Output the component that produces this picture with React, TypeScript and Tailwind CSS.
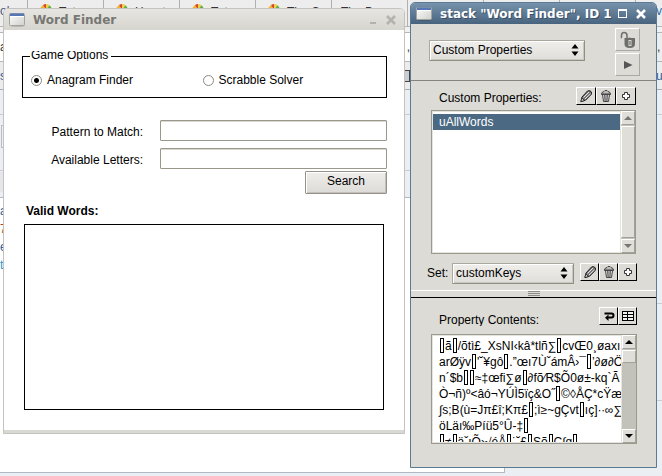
import React, { useState } from "react";

const SANS = "font-['Liberation_Sans',Arial,sans-serif]";
const TITLE = "font-['DejaVu_Sans',Verdana,sans-serif]";

/* ---------- icons ---------- */

function WindowIcon() {
  return (
    <svg width="17" height="14" viewBox="0 0 17 14" aria-hidden="true" className="shrink-0">
      <defs>
        <linearGradient id="pane" x1="0" y1="0" x2="1" y2="1">
          <stop offset="0" stopColor="#ffffff" />
          <stop offset="1" stopColor="#cfcfcb" />
        </linearGradient>
      </defs>
      <ellipse cx="8.500" cy="12.800" rx="7.500" ry="1.200" fill="#000" opacity="0.15" />
      <rect x="0.500" y="0.500" width="15" height="12" rx="1" fill="url(#pane)" stroke="#a3a3a0" />
      <rect x="1" y="0.500" width="14" height="2.500" fill="#5577b4" />
      <rect x="1" y="3" width="14" height="1" fill="#fff" />
    </svg>
  );
}

function PencilIcon() {
  return (
    <svg width="14" height="14" viewBox="0 0 14 14" aria-hidden="true">
      <path d="M3 8 L8.500 2 Q10.500 1 12 2.500 Q13 4 12.200 5.500 L6.500 11.300 L2 12.500 Z" fill="#777" stroke="#222" />
      <path d="M4.500 8.500 L10 3 M6 10 L11.500 4.800" stroke="#e6e6e6" strokeWidth="1" />
      <path d="M2.800 9.200 L5.500 11.500 L1.800 12.500 Z" fill="#fff" stroke="#111" strokeWidth="0.8" />
    </svg>
  );
}

function TrashIcon() {
  return (
    <svg width="14" height="14" viewBox="0 0 14 14" aria-hidden="true">
      <path d="M2.500 5 Q2.500 3 5 2.500 L6 1.500 H8 L9 2.500 Q11.500 3 11.500 5 Z" fill="#bbb" stroke="#444" />
      <path d="M3.500 5.500 L4.500 12.500 H9.500 L10.500 5.500 Z" fill="#e4e4e4" stroke="#444" />
      <path d="M5.500 6 L6 12 M7 6 V12 M8.500 6 L8 12 M2 5.500 H12" stroke="#444" strokeWidth="0.8" />
    </svg>
  );
}

function PlusIcon() {
  return (
    <svg width="14" height="14" viewBox="0 0 14 14" aria-hidden="true">
      <path
        d="M5.500 3.500 H8.500 V5.500 H10.500 V8.500 H8.500 V10.500 H5.500 V8.500 H3.500 V5.500 H5.500 Z"
        fill="#fff"
        stroke="#333"
      />
    </svg>
  );
}

function LockIcon() {
  return (
    <svg width="18" height="18" viewBox="0 0 18 18" aria-hidden="true">
      <path
        d="M3 6.500 H2.500 V4.500 Q2.500 1.500 5 1.500 Q8 1.500 8 4.500 V8"
        fill="none"
        stroke="#6e6e6a"
        strokeWidth="1.500"
      />
      <path d="M5.500 7 H9 Q10.500 6 12 7 H16 V13 Q16 17 10.800 17 Q5.500 17 5.500 13 Z" fill="#6e6e6a" />
      <rect x="9.500" y="9" width="3" height="6" fill="#dcdbd6" />
      <rect x="10.500" y="10" width="1" height="4" fill="#555" />
    </svg>
  );
}

function WrapIcon() {
  return (
    <svg width="14" height="14" viewBox="0 0 14 14" aria-hidden="true">
      <path
        d="M2.500 4.500 H9.500 Q11.500 4.500 11.500 6.200 Q11.500 8.500 9.500 8.500 H6"
        fill="none"
        stroke="#000"
        strokeWidth="2"
      />
      <path d="M6.500 5.500 V12 L3 8.700 Z" fill="#000" />
    </svg>
  );
}

function GridIcon() {
  return (
    <svg width="14" height="14" viewBox="0 0 14 14" aria-hidden="true">
      <rect x="1.500" y="2.500" width="11" height="9" fill="#f2f2ee" stroke="#000" />
      <path d="M1 5.500 H13 M1 8.500 H13 M6.500 2 V12" stroke="#000" />
    </svg>
  );
}

function TabFavicon() {
  return (
    <svg width="12" height="12" viewBox="0 0 12 12" aria-hidden="true" className="shrink-0">
      <path d="M0 6 A6 6 0 0 1 3 1 L6 6 Z" fill="#f2b430" />
      <path d="M3 1 A6 6 0 0 1 6 0 L6 6 Z" fill="#d8472b" />
      <path d="M6 0 A6 6 0 0 1 9.500 1.200 L6 6 Z" fill="#f0d040" />
      <path d="M9.500 1.200 A6 6 0 0 1 12 6 L6 6 Z" fill="#5fae46" />
      <path d="M0 6 H12 V12 H0 Z" fill="#e9842c" />
    </svg>
  );
}

/* ---------- small controls ---------- */

function ToolButton({ label, children }: { label: string; children: React.ReactNode }) {
  return (
    <button
      type="button"
      aria-label={label}
      className="flex h-[18px] min-w-0 flex-1 items-center justify-center border-t border-r border-b border-l border-t-white border-r-black border-b-black border-l-white bg-[#dcdbd6]"
    >
      {children}
    </button>
  );
}

function FlatButton({ label, children }: { label: string; children: React.ReactNode }) {
  return (
    <button
      type="button"
      aria-label={label}
      className="flex h-[23px] w-[25px] items-center justify-center border border-t-white border-r-[#aaa9a4] border-b-[#aaa9a4] border-l-white"
    >
      {children}
    </button>
  );
}

function PopupSelect({ label, id, options }: { label?: string; id: string; options: string[] }) {
  return (
    <div className="relative w-full">
      <select
        id={id}
        aria-label={label}
        className="block h-[21px] w-full appearance-none rounded-[1px] border border-t-[#aaa89f] border-r-[#918f84] border-b-[#918f84] border-l-[#aaa89f] bg-linear-to-b from-[#efeeeb] to-[#dfded9] pb-[2px] pl-[3px] text-[12px] leading-[16px] text-black shadow-[inset_1px_1px_0_#fff,inset_-1px_-1px_0_#c9c7bf]"
      >
        {options.map((o) => (
          <option key={o}>{o}</option>
        ))}
      </select>
      <svg
        width="8"
        height="12"
        viewBox="0 0 8 12"
        aria-hidden="true"
        className="pointer-events-none absolute top-[4px] right-[6px]"
      >
        <path d="M4 0 L7.500 4.500 H0.500 Z M4 12 L7.500 7.500 H0.500 Z" fill="#000" />
      </svg>
    </div>
  );
}

function ScrollArrow({ dir, dim }: { dir: "up" | "down"; dim?: boolean }) {
  return (
    <button
      type="button"
      aria-label={dir === "up" ? "Scroll up" : "Scroll down"}
      className="flex h-[14px] w-full shrink-0 items-center justify-center border border-t-white border-r-[#a3a198] border-b-[#a3a198] border-l-white bg-[#dfded9]"
    >
      <svg width="8" height="4" viewBox="0 0 8 4" aria-hidden="true">
        <path d={dir === "up" ? "M4 0 L8 4 H0 Z" : "M0 0 H8 L4 4 Z"} fill={dim ? "#777670" : "#000"} />
      </svg>
    </button>
  );
}

function Missing() {
  return <span className="mx-px inline-block h-[15px] w-[4px] border border-black align-[-3px]" />;
}

/* Unprintable characters are kept as "|" and shown as empty boxes. */
const CONTENTS = [
  "|ã|/õtì£_XsNI‹kâ*tlñ∑|cvŒ0¸øaxı",
  "arØÿv|'˘¥gô|.”œı7ÙˇámÂ›¯|’∂ø∂Ö",
  "n´$b||≈‡œﬁ∑ø|∂fõ⁄R$Õ0ø±-kq`Ã",
  "Ò¬ñ)º<âó¬YÚÌ5ïç&O˝|©◊ÅÇ*cŸæ",
  "∫s;B(ù=Jπ£î;Kπ£|;ì≥~gÇvt|ıç]·∙∞∑¸",
  "öLäı‰Píü5°Û-‡|",
  "|≠|äˇıÕ›√éÅ|˙˘£|Sõ|Ç∫g|",
];

function ContentLine({ text }: { text: string }) {
  const parts = text.split("|");
  return (
    <div className="h-[16px]">
      {parts.map((p, i) => (
        <React.Fragment key={i}>
          {i > 0 && <Missing />}
          {p}
        </React.Fragment>
      ))}
    </div>
  );
}

/* ---------- desktop behind the windows ---------- */

function Backdrop() {
  const tabs = ["Tutor", "How t", "Tutor", "The C"];
  return (
    <div
      aria-hidden="true"
      className="absolute inset-0 flex flex-col overflow-hidden bg-[#ebeff3] text-[12px] leading-[16px] text-[#333]"
    >
      <div className="flex h-[27px] shrink-0 border-b border-[#b5b5b5] bg-[#ededed]">
        <div className="w-[28px] border-r border-[#b0b0b0] pt-[3px] text-[#44587a]">ol</div>
        {tabs.map((t, i) => (
          <div key={i} className="flex w-[76px] items-start gap-[7px] border-r border-[#b0b0b0] pt-[4px] pl-[12px]">
            <TabFavicon />
            <span>{t}</span>
          </div>
        ))}
        <div className="w-[76px] border-r border-[#b0b0b0] pt-[4px] pl-[9px]">The Dow</div>
        <div className="w-[76px] border-r border-[#b0b0b0]" />
        <div className="w-[76px] border-r border-[#b0b0b0]" />
        <div className="w-[76px] border-r border-[#b0b0b0]" />
        <div className="flex-1 pt-[3px] pl-[20px] text-[#2c6aa8]">v</div>
      </div>
      <div className="h-[6px] shrink-0 border-b border-[#b5b5b5] bg-[#f1f1f1]" />
      <div className="flex h-[29px] shrink-0 justify-between border-b border-[#b5b5b5] bg-[#ededed]">
        <div className="flex w-[411px] justify-between bg-white pt-[6px]">
          <span>a</span>
          <span className="pr-px">,</span>
        </div>
        <div className="w-[5px] pt-[6px]">,</div>
      </div>
      <div className="flex h-[28px] shrink-0 items-center justify-between border-b border-[#a9adb1] bg-[#ececec]">
        <span className="text-[#2c5a9a]">s</span>
        <span className="mr-auto ml-[396px] h-[12px] w-[8px] border border-[#444] bg-[#c9cdd4]" />
        <span className="w-[6px] text-[#2c5a9a]">u</span>
      </div>
      <div className="h-[25px] shrink-0 border-b border-[#c9ccd0]" />
      <div className="flex min-h-0 flex-1">
        <div className="flex w-[505px] flex-col">
          <div className="h-[56px] border-b border-[#c9ccd0] pt-[10px]">
            <div className="ml-px h-[23px] w-[20px] border border-[#b9bcc0]" />
          </div>
          <div className="flex h-[27px] flex-col justify-end border-b border-[#b0b8c4]">
            <div className="mb-[5px] h-[20px] w-[3px] bg-[#e6e6ea]" />
          </div>
          <div className="flex-1 border-r border-b border-[#b0b8c4] bg-white pt-[5px] text-[#2c5a9a]">
            <div className="h-[18px]">a</div>
            <div className="h-[18px] text-[#b04020]">7</div>
            <div className="h-[18px]">ea</div>
            <div className="h-[18px] text-[#1f95d0]">ti</div>
          </div>
          <div className="h-[3px]" />
        </div>
        <div className="flex flex-1 flex-col">
          <div className="h-[189px] border-b border-[#c9ccd0]" />
          <div className="h-[97px] border-b border-[#c9ccd0]" />
        </div>
      </div>
    </div>
  );
}

/* ---------- Word Finder window ---------- */

function RadioOption({
  value,
  label,
  checked,
  onPick,
}: {
  value: string;
  label: string;
  checked: boolean;
  onPick: (v: string) => void;
}) {
  return (
    <label className="flex flex-1 items-center gap-[5px]">
      <input
        type="radio"
        name="mode"
        value={value}
        checked={checked}
        onChange={() => onPick(value)}
        className="h-[11px] w-[11px] appearance-none rounded-full border border-[#8b8980] bg-white checked:bg-[radial-gradient(circle,#000_0_2px,#fff_3px)]"
      />
      {label}
    </label>
  );
}

function WordFinderWindow() {
  const [mode, setMode] = useState("anagram");
  return (
    <section className="absolute top-[8px] left-[3px] w-[402px] rounded-t-[5px] border border-[#c3c3bf] bg-white">
      <header
        className={`flex h-[21px] items-center rounded-t-[4px] bg-linear-to-b from-[#e6e5e1] to-[#d6d5cf] pr-[8px] pl-[5px] text-[12px] font-bold text-[#777773] ${TITLE}`}
      >
        <WindowIcon />
        <h1 className="mr-auto ml-[7px] leading-[16px]">Word Finder</h1>
        <button type="button" aria-label="Minimize" className="mr-[10px]">
          <svg width="6" height="10" viewBox="0 0 6 10" aria-hidden="true">
            <rect y="7" width="6" height="2" fill="#b3b2ad" />
          </svg>
        </button>
        <button type="button" aria-label="Close">
          <svg width="10" height="10" viewBox="0 0 10 10" aria-hidden="true">
            <path d="M1 1 L9 9 M9 1 L1 9" stroke="#b3b2ad" strokeWidth="2.500" />
          </svg>
        </button>
      </header>

      <div className="pt-[21px] pr-[17px] pb-[20px] pl-[18px]">
        <fieldset className="h-[47px] border border-black pr-[12px] pl-[8px]">
          <legend className="-ml-px flex h-[10px] items-end overflow-hidden pr-[3px] pl-px leading-[12px]">
            Game Options
          </legend>
          <div className="flex pt-[11px]">
            <RadioOption value="anagram" label="Anagram Finder" checked={mode === "anagram"} onPick={setMode} />
            <RadioOption value="scrabble" label="Scrabble Solver" checked={mode === "scrabble"} onPick={setMode} />
          </div>
        </fieldset>

        <div className="mt-[22px] grid grid-cols-[121px_1fr] gap-x-[17px] gap-y-[7px]">
          <label htmlFor="pattern" className="pt-[4px] text-right">
            Pattern to Match:
          </label>
          <input
            id="pattern"
            className="h-[21px] w-full rounded-[1px] border border-[#9a978b] bg-white px-[3px] shadow-[inset_0_1px_0_#d8d7d1]"
          />
          <label htmlFor="letters" className="pt-[4px] text-right">
            Available Letters:
          </label>
          <input
            id="letters"
            className="h-[21px] w-full rounded-[1px] border border-[#9a978b] bg-white px-[3px] shadow-[inset_0_1px_0_#d8d7d1]"
          />
        </div>

        <div className="mt-[2px] flex justify-end">
          <button
            type="button"
            className="h-[23px] w-[82px] rounded-[1px] border border-[#95928a] bg-linear-to-b from-[#efeeec] to-[#dcdbd7] pb-[3px] shadow-[inset_1px_1px_0_#fff,inset_-1px_-1px_0_#c3c1b9]"
          >
            Search
          </button>
        </div>

        <h2 id="valid" className="mt-[9px] ml-[4px] font-bold">
          Valid Words:
        </h2>
        <div
          role="listbox"
          aria-labelledby="valid"
          className="mt-[5px] mr-[3px] ml-[2px] h-[186px] border border-black"
        />
      </div>
      <div className="h-[3px] bg-[#d9d9d4]" />
    </section>
  );
}

/* ---------- property inspector window ---------- */

function InspectorWindow() {
  return (
    <section className="absolute top-[2px] left-[410px] w-[247px] rounded-t-[5px] border border-[#5b7a94] bg-[#dcdbd6]">
      <header
        className={`flex h-[21px] items-center rounded-t-[4px] bg-linear-to-b from-[#7793ab] to-[#48637e] pr-[10px] pl-[5px] text-[12px] font-bold text-white ${TITLE}`}
      >
        <WindowIcon />
        <h1 className="mr-auto ml-[7px] leading-[16px] whitespace-nowrap [text-shadow:1px_1px_0_#3b5068]">
          stack "Word Finder", ID 1
        </h1>
        <button type="button" aria-label="Maximize" className="mr-[9px]">
          <svg width="9" height="9" viewBox="0 0 9 9" aria-hidden="true">
            <path d="M0 1 H9 M0.500 0 V9 M8.500 0 V9 M0 8.500 H9" stroke="#fff" />
            <path d="M0 1 H9" stroke="#fff" strokeWidth="2" />
          </svg>
        </button>
        <button type="button" aria-label="Close">
          <svg width="10" height="10" viewBox="0 0 10 10" aria-hidden="true">
            <path d="M1 1 L9 9 M9 1 L1 9" stroke="#fff" strokeWidth="2.500" />
          </svg>
        </button>
      </header>

      <div className="flex h-[57px] justify-between border-b border-[#85847e] pr-[16px] pl-[18px]">
        <div className="w-[156px] pt-[16px]">
          <PopupSelect id="pane-select" label="Inspector pane" options={["Custom Properties"]} />
        </div>
        <div className="flex flex-col gap-[2px] pt-[4px]">
          <FlatButton label="Lock">
            <LockIcon />
          </FlatButton>
          <FlatButton label="Run">
            <svg width="10" height="10" viewBox="0 0 10 10" aria-hidden="true">
              <path d="M1 1 L9.500 5 L1 9 Z" fill="#555" />
            </svg>
          </FlatButton>
        </div>
      </div>

      <div className="pr-[20px] pl-[20px]">
        <div className="flex justify-between pt-[6px] pl-[8px]">
          <h2 id="props" className="pt-[3px]">
            Custom Properties:
          </h2>
          <div className="flex w-[60px]">
            <ToolButton label="Rename property">
              <PencilIcon />
            </ToolButton>
            <ToolButton label="Delete property">
              <TrashIcon />
            </ToolButton>
            <ToolButton label="Add property">
              <PlusIcon />
            </ToolButton>
          </div>
        </div>

        <div className="mt-[4px] flex h-[144px] border border-[#9c998e] bg-white">
          <ul role="listbox" aria-labelledby="props" className="min-w-0 flex-1 border border-[#e4e3de] pt-[2px]">
            <li role="option" aria-selected="true" className="bg-[#4b6983] pl-[6px] text-white">
              uAllWords
            </li>
          </ul>
          <div className="flex w-[14px] flex-col gap-px bg-[#c3c2ba]">
            <ScrollArrow dir="up" dim />
            <div className="flex-1 border border-t-white border-r-[#a3a198] border-b-[#a3a198] border-l-white bg-[#dfded9]" />
            <ScrollArrow dir="down" dim />
          </div>
        </div>
      </div>

      <div className="flex pt-[9px] pr-[19px] pb-[6px] pl-[16px]">
        <label htmlFor="set" className="w-[25px] pt-[2px]">
          Set:
        </label>
        <div className="w-[122px]">
          <PopupSelect id="set" options={["customKeys"]} />
        </div>
        <div className="ml-auto flex w-[57px]">
          <ToolButton label="Rename set">
            <PencilIcon />
          </ToolButton>
          <ToolButton label="Delete set">
            <TrashIcon />
          </ToolButton>
          <ToolButton label="Add set">
            <PlusIcon />
          </ToolButton>
        </div>
      </div>

      <div className="flex h-[8px] justify-center border-t border-b border-t-white border-b-black">
        <div className="flex w-[12px] flex-col gap-px">
          <span className="h-px bg-[#8d8c86]" />
          <span className="h-px bg-[#8d8c86]" />
          <span className="h-px bg-[#8d8c86]" />
        </div>
      </div>

      <div className="pt-[9px] pr-[19px] pb-[23px] pl-[20px]">
        <div className="flex justify-between pl-[8px]">
          <h2 id="contents" className="mt-[5px] h-[14px] overflow-hidden">
            Property Contents:
          </h2>
          <div className="flex w-[38px]">
            <ToolButton label="Wrap lines">
              <WrapIcon />
            </ToolButton>
            <ToolButton label="Show as table">
              <GridIcon />
            </ToolButton>
          </div>
        </div>
        <div className="mt-[8px] flex h-[110px] border border-[#9c998e] bg-white">
          <div
            role="textbox"
            aria-multiline="true"
            aria-labelledby="contents"
            tabIndex={0}
            className="min-w-0 flex-1 overflow-hidden border border-[#e4e3de] pt-[2px] pl-[6px] whitespace-nowrap"
          >
            {CONTENTS.map((line, i) => (
              <ContentLine key={i} text={line} />
            ))}
          </div>
          <div className="flex w-[14px] flex-col bg-[#c3c2ba]">
            <ScrollArrow dir="up" />
            <div className="mt-px mb-auto h-[13px] border border-t-white border-r-[#a3a198] border-b-[#a3a198] border-l-white bg-[#dfded9]" />
            <ScrollArrow dir="down" />
          </div>
        </div>
      </div>
    </section>
  );
}

export default function App() {
  return (
    <main className={`relative min-h-screen overflow-hidden text-[12px] leading-[16px] text-black ${SANS}`}>
      <Backdrop />
      <WordFinderWindow />
      <InspectorWindow />
    </main>
  );
}
